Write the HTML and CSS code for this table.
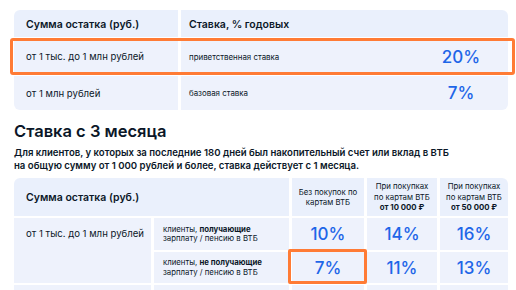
FILE: index.html
```html
<!DOCTYPE html>
<html lang="ru">
<head>
<meta charset="utf-8">
<link rel="stylesheet" href="styles.css">
</head>
<body>
<div class="page">
  <div class="t1">
    <div class="r1 head">
      <div class="c a tl">Сумма остатка (руб.)</div>
      <div class="c b tr">Ставка, % годовых</div>
    </div>
    <div class="r1 hl">
      <div class="c a">от 1 тыс. до 1 млн рублей</div>
      <div class="c b"><span class="lbl">приветственная ставка</span><span class="val">20%</span></div>
    </div>
    <div class="r1">
      <div class="c a bl">от 1 млн рублей</div>
      <div class="c b br"><span class="lbl">базовая ставка</span><span class="val">7%</span></div>
    </div>
  </div>

  <h2 class="title">Ставка с 3 месяца</h2>
  <p class="note">Для клиентов, у которых за последние 180 дней был накопительный счет или вклад в ВТБ<br>на общую сумму от 1 000 рублей и более, ставка действует с 1 месяца.</p>

  <div class="t2">
    <div class="g hcell span2 tl">Сумма остатка (руб.)</div>
    <div class="g colh"><div>Без покупок по<br>картам ВТБ</div></div>
    <div class="g colh"><div>При покупках<br>по картам ВТБ<br><b>от 10 000 ₽</b></div></div>
    <div class="g colh tr"><div>При покупках<br>по картам ВТБ<br><b>от 50 000 ₽</b></div></div>

    <div class="g sum rows2">от 1 тыс. до 1 млн рублей</div>
    <div class="g who"><div>клиенты, <b>получающие</b><br>зарплату / пенсию в ВТБ</div></div>
    <div class="g num">10%</div>
    <div class="g num">14%</div>
    <div class="g num">16%</div>

    <div class="g who"><div>клиенты, <b>не получающие</b><br>зарплату / пенсию в ВТБ</div></div>
    <div class="g num hl2">7%</div>
    <div class="g num">11%</div>
    <div class="g num">13%</div>

    <div class="g"></div>
    <div class="g"></div>
    <div class="g"></div>
    <div class="g"></div>
    <div class="g"></div>
  </div>
</div>
</body>
</html>
```

FILE: styles.css
```css
* { box-sizing: border-box; }
html, body { margin: 0; padding: 0; background: #fff; }
body {
  font-family: "Inter", "Noto Sans", sans-serif;
  color: #0b1728;
  width: 516px;
  height: 290px;
  overflow: hidden;
}
.page { padding: 10px 8px 0 14px; }

/* top table */
.t1 { display: flex; flex-direction: column; gap: 3px; width: 494px; }
.r1 { display: flex; gap: 3px; position: relative; }
.r1 .c { background: #eef2fc; display: flex; align-items: center; }
.r1 .a { width: 164px; padding-left: 12px; font-size: 9.6px; }
.r1 .b { flex: 1; padding-left: 8px; }
.r1.head { height: 27px; }
.r1.head .c { font-weight: 600; font-size: 10.5px; background: #eaf0fc; padding-top: 2px; }
.r1.hl { height: 33px; }
.r1:last-child { height: 34px; }
.hl::after {
  content: "";
  position: absolute;
  left: -4px; right: -7px; top: -2px; bottom: -2px;
  border: 3px solid #ff7b35;
  border-radius: 3px;
}
.lbl { flex: 1; font-size: 7.9px; }
.val { width: 94px; text-align: center; font-size: 17px; font-weight: 500; color: #1e66e8; }
.tl { border-top-left-radius: 6px; }
.tr { border-top-right-radius: 6px; }
.bl { border-bottom-left-radius: 6px; }
.br { border-bottom-right-radius: 6px; }

.title { margin: 10px 0 0; font-size: 16.5px; font-weight: 600; line-height: 22px; }
.note { margin: 4px 0 0; font-size: 9.6px; font-weight: 600; line-height: 13px; }

/* bottom table */
.t2 {
  margin-top: 6px;
  display: grid;
  width: 494px;
  grid-template-columns: 137px 135px 72px 70px 68px;
  grid-template-rows: 38px 32px 31px 32px;
  column-gap: 3px;
  row-gap: 2px;
}
.g { background: #eef2fc; }
.hcell { grid-column: span 2; display: flex; align-items: center; padding-left: 12px; font-size: 10.5px; font-weight: 600; background: #eaf0fc; }
.colh { font-size: 7.8px; line-height: 10.5px; text-align: center; display: flex; align-items: center; justify-content: center; background: #eaf0fc; }
.colh b { font-weight: 700; }
.sum { grid-row: span 2; padding: 10px 0 0 12px; font-size: 9.6px; }
.who { font-size: 7.8px; line-height: 9.5px; padding-left: 9px; display: flex; align-items: center; }
.who b { font-weight: 700; }
.num { display: flex; align-items: center; justify-content: center; font-size: 17px; font-weight: 500; color: #1e66e8; }
.hl2 { position: relative; }
.hl2::after {
  content: "";
  position: absolute;
  left: -4px; right: -3px; top: -3px; bottom: -1px;
  border: 3px solid #ff7b35;
  border-radius: 2px;
}
```
